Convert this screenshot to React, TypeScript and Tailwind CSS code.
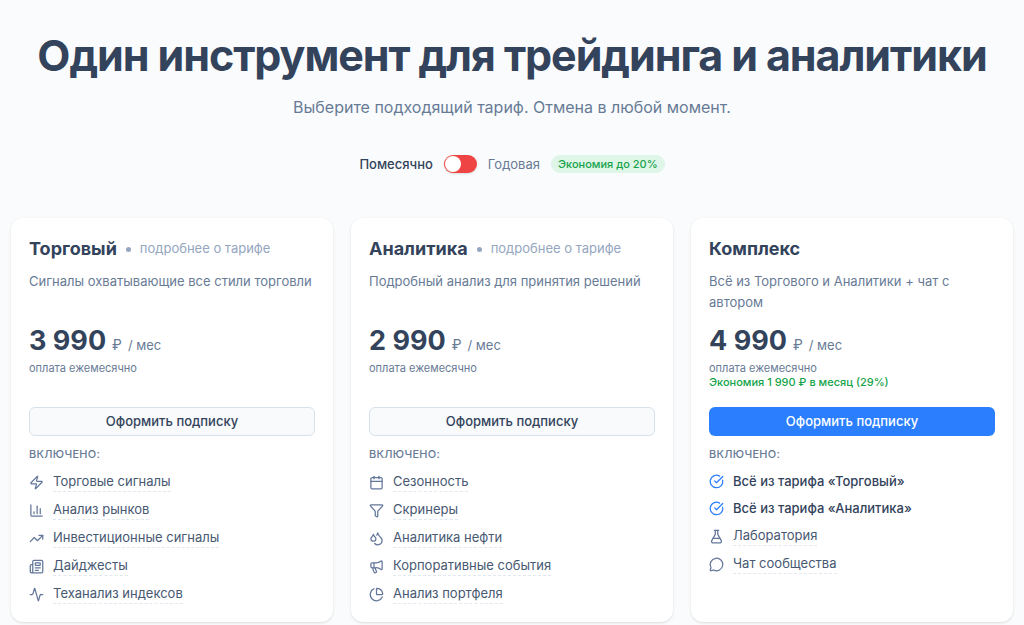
import { useState } from "react";
import {
  Activity,
  Calendar,
  ChartColumn,
  ChartPie,
  CircleCheckBig,
  Droplets,
  FlaskConical,
  Funnel,
  Megaphone,
  MessageCircle,
  Newspaper,
  TrendingUp,
  Zap,
  type LucideIcon,
} from "lucide-react";

interface Feature {
  icon: LucideIcon;
  label: string;
  included?: boolean;
}

interface Plan {
  name: string;
  description: string;
  price: string;
  saving?: string;
  details?: boolean;
  primary?: boolean;
  features: Feature[];
}

const plans: Plan[] = [
  {
    name: "Торговый",
    description: "Сигналы охватывающие все стили торговли",
    price: "3 990",
    details: true,
    features: [
      { icon: Zap, label: "Торговые сигналы" },
      { icon: ChartColumn, label: "Анализ рынков" },
      { icon: TrendingUp, label: "Инвестиционные сигналы" },
      { icon: Newspaper, label: "Дайджесты" },
      { icon: Activity, label: "Теханализ индексов" },
    ],
  },
  {
    name: "Аналитика",
    description: "Подробный анализ для принятия решений",
    price: "2 990",
    details: true,
    features: [
      { icon: Calendar, label: "Сезонность" },
      { icon: Funnel, label: "Скринеры" },
      { icon: Droplets, label: "Аналитика нефти" },
      { icon: Megaphone, label: "Корпоративные события" },
      { icon: ChartPie, label: "Анализ портфеля" },
    ],
  },
  {
    name: "Комплекс",
    description: "Всё из Торгового и Аналитики + чат с автором",
    price: "4 990",
    saving: "Экономия 1 990 ₽ в месяц (29%)",
    primary: true,
    features: [
      { icon: CircleCheckBig, label: "Всё из тарифа «Торговый»", included: true },
      { icon: CircleCheckBig, label: "Всё из тарифа «Аналитика»", included: true },
      { icon: FlaskConical, label: "Лаборатория" },
      { icon: MessageCircle, label: "Чат сообщества" },
    ],
  },
];

function FeatureItem({ icon: Icon, label, included }: Feature) {
  if (included) {
    return (
      <li className="flex items-center gap-[9px] text-[#33435b]">
        <Icon className="h-[15px] w-[15px] shrink-0 text-blue-500" />
        <span className="font-medium">{label}</span>
      </li>
    );
  }

  return (
    <li className="flex items-center gap-[9px] text-[#475872]">
      <Icon className="h-[15px] w-[15px] shrink-0 text-[#64779a]" />
      <a href="#" className="border-b border-dashed border-slate-200">
        {label}
      </a>
    </li>
  );
}

function PlanCard({ plan }: { plan: Plan }) {
  return (
    <article className="flex flex-col rounded-xl bg-white p-[18px] shadow-sm">
      <div className="flex items-center gap-[9px]">
        <h2 className="text-lg leading-[26px] font-bold text-[#33435b]">{plan.name}</h2>
        {plan.details && (
          <>
            <span className="h-[5px] w-[5px] rounded-full bg-[#94a6c0]" />
            <a href="#" className="text-[13px] text-[#94a6c0]">
              подробнее о тарифе
            </a>
          </>
        )}
      </div>

      <p className="mt-[9px] min-h-[42px] text-[13px] leading-[21px] text-[#687b96]">
        {plan.description}
      </p>

      <div className="mt-3 flex items-baseline gap-[6px] text-[#687b96]">
        <span className="text-[27px] leading-[32px] font-bold text-[#33435b]">{plan.price}</span>
        <span className="text-sm">₽</span>
        <span className="text-[13px]">/ мес</span>
      </div>

      <div className="mt-1 min-h-[46px] text-[11px] leading-[14px]">
        <p className="text-[#687b96]">оплата ежемесячно</p>
        {plan.saving && <p className="font-medium text-[#16a34a]">{plan.saving}</p>}
      </div>

      <button
        type="button"
        className={
          plan.primary
            ? "h-[29px] rounded-md bg-[#2b7fff] text-[13px] font-medium text-white"
            : "h-[29px] rounded-md border border-[#d7e1ed] bg-slate-50 text-[13px] font-medium text-[#33435b]"
        }
      >
        Оформить подписку
      </button>

      <h3 className="mt-[10px] text-[11px] leading-4 font-medium tracking-wide text-[#687b96] uppercase">
        Включено:
      </h3>
      <ul className="mt-[10px] space-y-2 text-[13px] leading-[19px]">
        {plan.features.map((feature) => (
          <FeatureItem key={feature.label} {...feature} />
        ))}
      </ul>
    </article>
  );
}

export default function App() {
  const [yearly, setYearly] = useState(false);

  return (
    <main className="min-h-screen bg-[#fafbfd] px-[11px] pt-7 font-[Inter,sans-serif]">
      <header className="text-center">
        <h1 className="text-[43px] leading-[55px] font-bold tracking-tight text-[#33435b]">
          Один инструмент для трейдинга и аналитики
        </h1>
        <p className="mt-3 text-base text-[#687b96]">
          Выберите подходящий тариф. Отмена в любой момент.
        </p>
      </header>

      <div className="mt-[35px] flex items-center justify-center gap-[11px] text-[13px] leading-[20px]">
        <span className="font-medium text-[#33435b]">Помесячно</span>
        <button
          type="button"
          role="switch"
          aria-checked={yearly}
          aria-label="Годовая оплата"
          onClick={() => setYearly(!yearly)}
          className="flex h-[18px] w-[33px] items-center rounded-full bg-[#ef4444] px-px shadow-sm"
        >
          <span
            className={
              yearly
                ? "h-4 w-4 translate-x-[15px] rounded-full bg-white transition"
                : "h-4 w-4 rounded-full bg-white transition"
            }
          />
        </button>
        <span className="text-[#687b96]">Годовая</span>
        <span className="rounded-full bg-[#def5e8] px-[7px] text-[11px] leading-[18px] font-medium text-[#16a34a]">
          Экономия до 20%
        </span>
      </div>

      <section className="mt-11 grid grid-cols-3 gap-[18px]">
        {plans.map((plan) => (
          <PlanCard key={plan.name} plan={plan} />
        ))}
      </section>
    </main>
  );
}
